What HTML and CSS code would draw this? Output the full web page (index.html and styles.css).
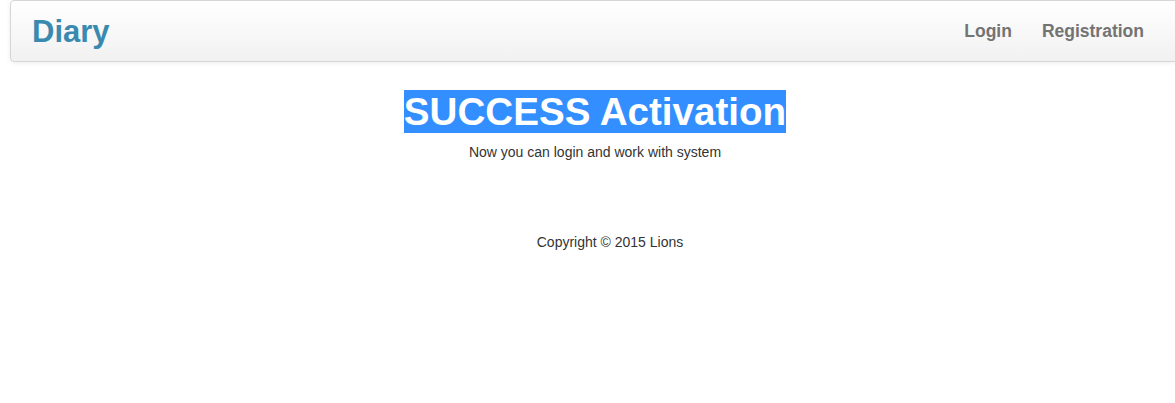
FILE: index.html
```html
<!DOCTYPE html>
<html>
<head>
<meta charset="utf-8">
<title>Diary</title>
<link rel="stylesheet" href="styles.css">
</head>
<body>
<div class="page">
  <nav class="navbar">
    <a class="brand" href="#">Diary</a>
    <ul class="nav">
      <li><a href="#">Login</a></li>
      <li><a href="#">Registration</a></li>
    </ul>
  </nav>
  <main class="content">
    <h1 class="title"><span class="sel">SUCCESS Activation</span></h1>
    <p class="lead">Now you can login and work with system</p>
  </main>
  <footer class="footer">Copyright © 2015 Lions</footer>
</div>
</body>
</html>
```
FILE: styles.css
```css
html, body {
  margin: 0;
  padding: 0;
  overflow: hidden;
  background: #fff;
}
body {
  font-family: "Liberation Sans", Arial, sans-serif;
  font-size: 14px;
  color: #333;
}
.page {
  width: 1190px;
}
.navbar {
  margin: 0 10px;
  box-sizing: border-box;
  height: 62px;
  border: 1px solid #d6d6d6;
  border-radius: 4px;
  background: linear-gradient(to bottom, #ffffff 0%, #f1f1f1 100%);
  box-shadow: inset 0 1px 0 rgba(255,255,255,.15), 0 1px 5px rgba(0,0,0,.075);
  display: flex;
  align-items: center;
  justify-content: space-between;
}
.brand {
  font-weight: bold;
  font-size: 31px;
  color: #3a8ab0;
  text-decoration: none;
  padding-left: 21px;
  line-height: 1;
  margin-top: 1px;
}
.nav {
  list-style: none;
  margin: 2px 0 0;
  padding: 0 20px 0 0;
  display: flex;
}
.nav a {
  display: block;
  padding: 0 15px;
  font-size: 17.5px;
  font-weight: bold;
  color: #737373;
  text-decoration: none;
  line-height: 1;
}
.content {
  text-align: center;
}
.title {
  margin: 28px 0 0;
  font-size: 38.6px;
  font-weight: bold;
  line-height: 44px;
}
.sel {
  background: #338fff;
  color: #fff;
}
.lead {
  margin: 8px 0 0;
  line-height: 20px;
}
.footer {
  text-align: center;
  padding-left: 30px;
  margin-top: 70px;
  line-height: 20px;
}
```
